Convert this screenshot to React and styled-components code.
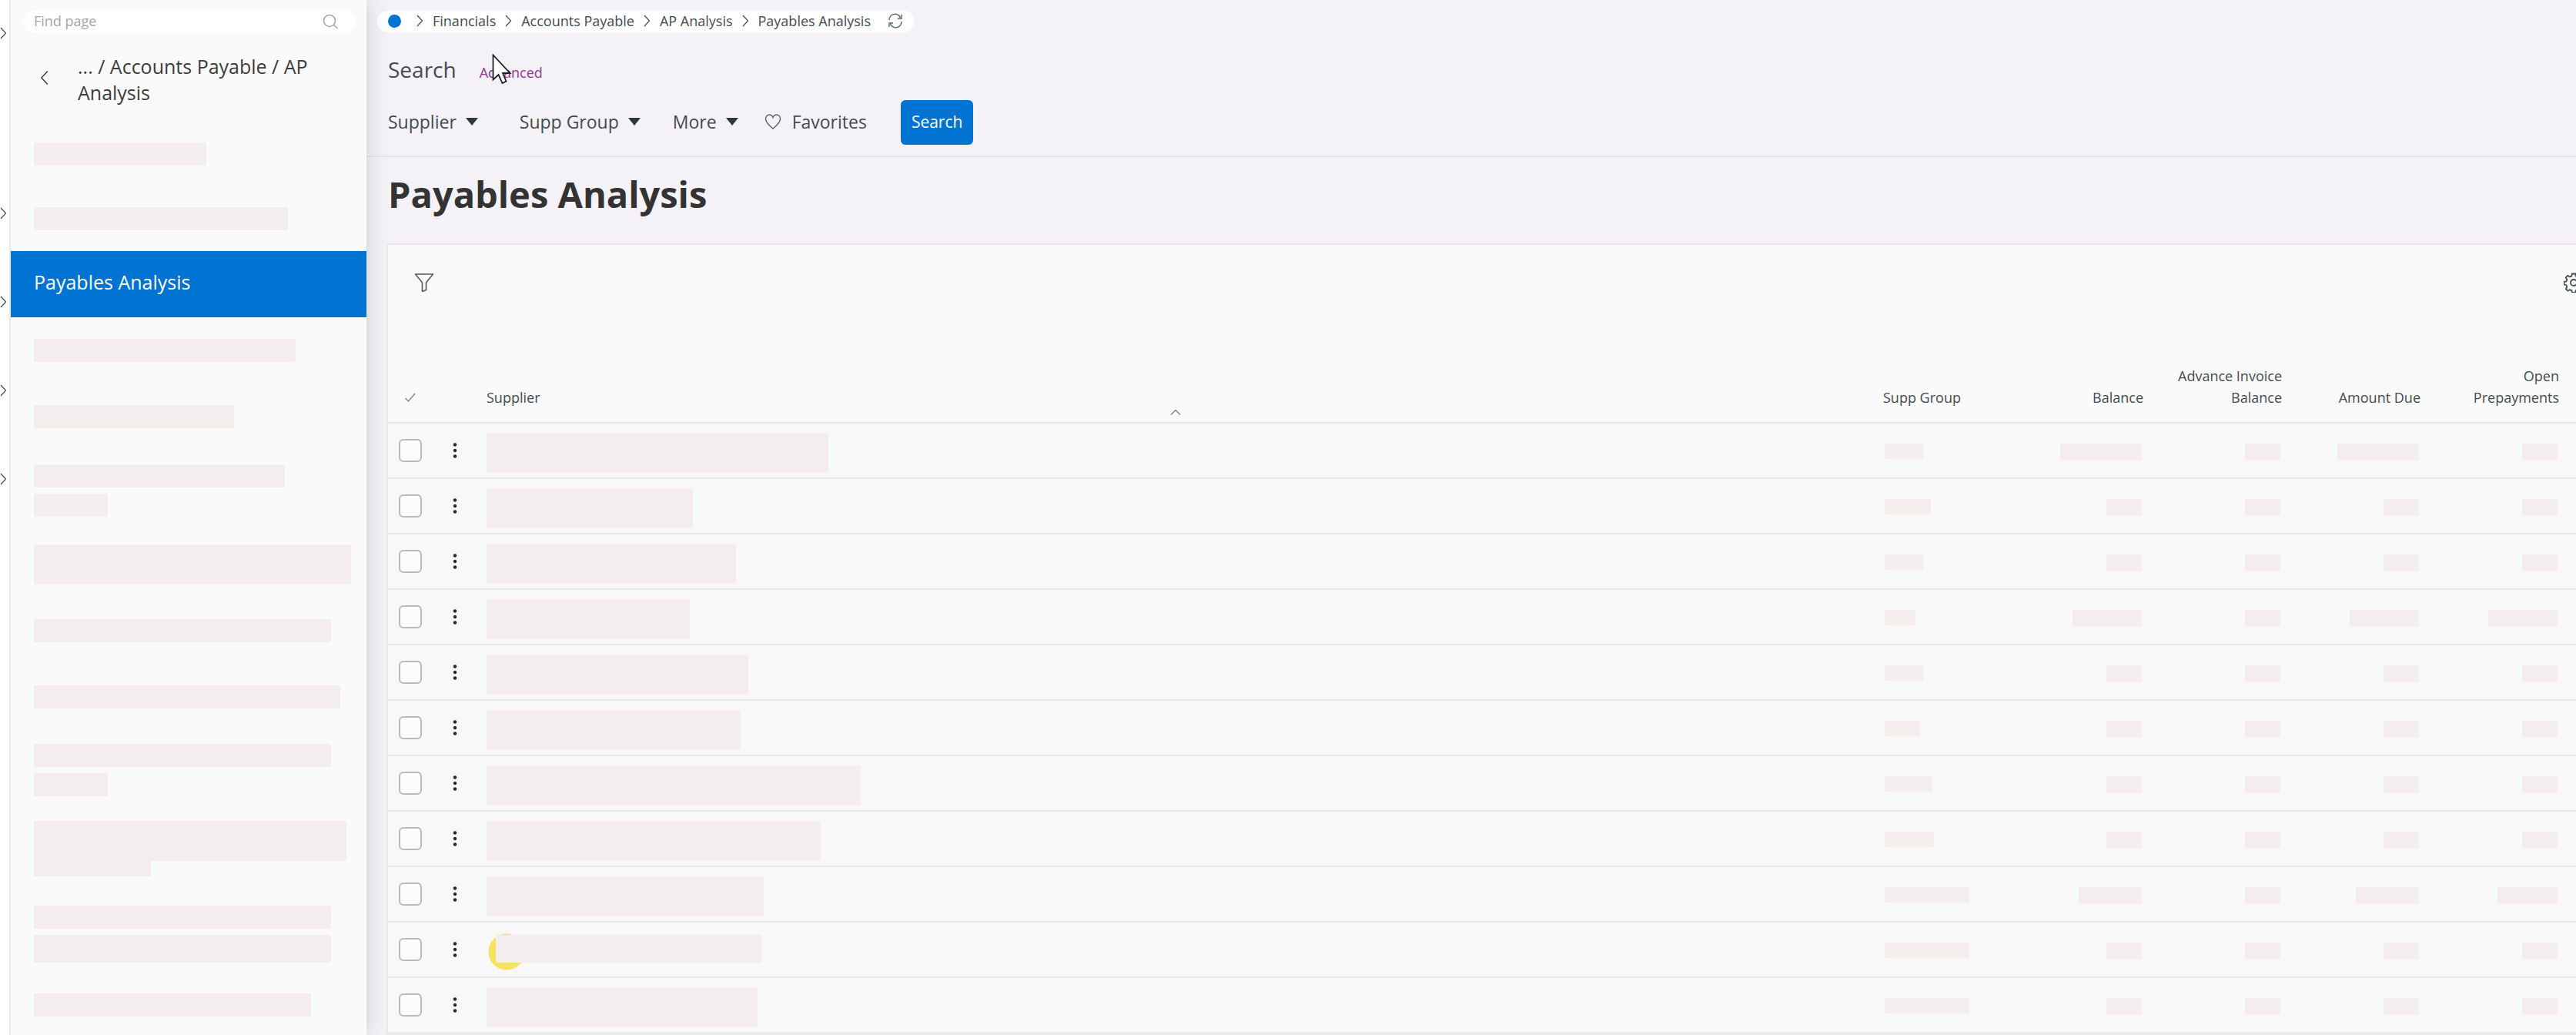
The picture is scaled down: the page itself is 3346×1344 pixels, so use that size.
import React from "react";
import styled, { createGlobalStyle } from "styled-components";

const GlobalStyle = createGlobalStyle`
  * {
    box-sizing: border-box;
  }
  html, body, #root {
    height: 100%;
  }
  body {
    margin: 0;
    overflow: hidden;
    font-family: "Open Sans", "Noto Sans", sans-serif;
    color: #444b50;
    background-color: #f4f2f6;
  }
  button {
    padding: 0;
    border: none;
    background: none;
    font-family: inherit;
    color: inherit;
    cursor: pointer;
  }
  a {
    color: inherit;
    text-decoration: none;
  }
`;

// pad is the space above and below the bars of an entry
const navTop = [
  { id: 1, pad: 27, bars: [{ w: 224, h: 30 }] },
  { id: 2, pad: 27, bars: [{ w: 330, h: 30 }] },
];

const navBottom = [
  { id: 3, pad: 28, bars: [{ w: 340, h: 30 }] },
  { id: 4, pad: 28, bars: [{ w: 260, h: 30 }] },
  { id: 5, pad: 19, bars: [{ w: 326, h: 30 }, { w: 96, h: 30 }] },
  { id: 6, pad: 17, bars: [{ w: 412, h: 52 }] },
  { id: 7, pad: 28, bars: [{ w: 386, h: 30 }] },
  { id: 8, pad: 28, bars: [{ w: 398, h: 30 }] },
  { id: 9, pad: 18, bars: [{ w: 386, h: 30 }, { w: 96, h: 30 }] },
  { id: 10, pad: 14, joined: true, bars: [{ w: 406, h: 52 }, { w: 152, h: 20 }] },
  { id: 11, pad: 24, bars: [{ w: 386, h: 30 }, { w: 386, h: 36 }] },
  { id: 12, pad: 16, bars: [{ w: 360, h: 30 }] },
];

// widths of the masked values: supplier, group, balance, advance, due, open
const rows = [
  { id: 1, supplier: 444, group: 50, amounts: [106, 46, 106, 46] },
  { id: 2, supplier: 268, group: 60, amounts: [46, 46, 46, 46] },
  { id: 3, supplier: 324, group: 50, amounts: [46, 46, 46, 46] },
  { id: 4, supplier: 264, group: 40, amounts: [90, 46, 90, 90] },
  { id: 5, supplier: 340, group: 50, amounts: [46, 46, 46, 46] },
  { id: 6, supplier: 330, group: 46, amounts: [46, 46, 46, 46] },
  { id: 7, supplier: 486, group: 62, amounts: [46, 46, 46, 46] },
  { id: 8, supplier: 434, group: 64, amounts: [46, 46, 46, 46] },
  { id: 9, supplier: 360, group: 110, amounts: [82, 46, 82, 78] },
  { id: 10, supplier: 346, group: 110, amounts: [46, 46, 46, 46], flagged: true },
  { id: 11, supplier: 352, group: 110, amounts: [46, 46, 46, 46] },
];

const crumbs = ["Financials", "Accounts Payable", "AP Analysis", "Payables Analysis"];

const Chevron = ({ left, size = 14 }) => (
  <svg width={size / 2 + 2} height={size + 2} viewBox="0 0 9 16" fill="none" stroke="currentColor" strokeWidth="1.2">
    <path d={left ? "M8 1 1.5 8 8 15" : "M1 1 7.5 8 1 15"} />
  </svg>
);

const SearchIcon = () => (
  <svg width="22" height="22" viewBox="0 0 22 22" fill="none" stroke="#a6a6a6" strokeWidth="1.6">
    <circle cx="10" cy="10" r="7.5" />
    <path d="m15.5 15.5 5 4.5" />
  </svg>
);

const RefreshIcon = () => (
  <svg width="20" height="20" viewBox="0 0 20 20" fill="none" stroke="#5b6266" strokeWidth="1.4">
    <path d="M2 9a7.5 7.5 0 0 1 14.5-3M18 2v5h-5" />
    <path d="M18 11a7.5 7.5 0 0 1-14.5 3M2 18v-5h5" />
  </svg>
);

const HeartIcon = () => (
  <svg width="22" height="22" viewBox="0 0 22 22" fill="none" stroke="#5b6266" strokeWidth="1.4">
    <path d="M11 20C7 16.5 1.5 12.5 1.5 7.500 1.500 4 3.800 2 6.300 2 8.500 2 10.200 3.300 11 5.500 11.800 3.300 13.500 2 15.700 2c2.500 0 4.800 2 4.800 5.500 0 5-5.500 9-9.500 12.500Z" />
  </svg>
);

const FilterIcon = () => (
  <svg width="26" height="26" viewBox="0 0 26 26" fill="none" stroke="#555b5f" strokeWidth="1.6">
    <path d="M1.500 2h23L15.500 13v9.500l-5 2V13Z" strokeLinejoin="round" />
  </svg>
);

const GearIcon = () => (
  <svg width="26" height="26" viewBox="0 0 26 26" fill="none" stroke="#444b50" strokeWidth="1.8">
    <path d="M11 1.500h4l.7 3 2.300 1 2.700-1.700 2.500 2.700-1.500 2.700 1 2.300 2.800.5v3.500l-2.800.7-1 2.300 1.500 2.700-2.500 2.500-2.700-1.500-2.300 1-.7 2.800h-4l-.7-2.800-2.300-1-2.700 1.500-2.500-2.500 1.500-2.700-1-2.300-2.800-.7V12l2.800-.5 1-2.300-1.500-2.700 2.500-2.700L8 5.500l2.300-1Z" />
    <circle cx="13" cy="13" r="4" />
  </svg>
);

const CheckIcon = () => (
  <svg width="16" height="14" viewBox="0 0 16 14" fill="none" stroke="#7f8488" strokeWidth="1.4">
    <path d="m1.500 8 4 4L14 2" />
  </svg>
);

const DotsIcon = () => (
  <svg width="6" height="20" viewBox="0 0 6 20" fill="#22282c">
    <circle cx="3" cy="2.500" r="2.200" />
    <circle cx="3" cy="10" r="2.200" />
    <circle cx="3" cy="17.500" r="2.200" />
  </svg>
);

const SortIcon = () => (
  <svg width="14" height="9" viewBox="0 0 14 9" fill="none" stroke="#7f8488" strokeWidth="1.500">
    <path d="m1 7.500 6-6 6 6" />
  </svg>
);

const PointerIcon = () => (
  <svg width="26" height="40" viewBox="0 0 26 40" fill="#fff" stroke="#1d1d2b" strokeWidth="1.800">
    <path d="M1.500 1.500v32l7-6.500 5 11 5-2.500-4.500-10.500H23.500Z" />
  </svg>
);

const NavEntry = ({ entry }) => (
  <NavItem $pad={entry.pad} $joined={entry.joined}>
    {entry.bars.map((bar, i) => (
      <Mask key={i} $w={bar.w} $h={bar.h} />
    ))}
  </NavItem>
);

const App = () => {
  return (
    <Page>
      <GlobalStyle />

      {/* Collapsed navigator strip */}
      <Strip>
        {[0, 1, 2, 3, 4].map((n) => (
          <StripButton key={n} aria-label="Expand">
            <Chevron />
          </StripButton>
        ))}
      </Strip>

      <Sidebar>
        <FindBox>
          <input type="text" placeholder="Find page" aria-label="Find page" />
          <SearchIcon />
        </FindBox>
        <BackRow>
          <button aria-label="Back">
            <Chevron left size={18} />
          </button>
          <span>... / Accounts Payable / AP Analysis</span>
        </BackRow>
        <NavList>
          {navTop.map((entry) => (
            <NavEntry key={entry.id} entry={entry} />
          ))}
          <li>
            <CurrentLink href="#payables">Payables Analysis</CurrentLink>
          </li>
          {navBottom.map((entry) => (
            <NavEntry key={entry.id} entry={entry} />
          ))}
        </NavList>
      </Sidebar>

      <Main>
        <SearchArea>
          <Crumbs>
            <HomeDot href="#home" aria-label="Home" />
            {crumbs.map((crumb) => (
              <React.Fragment key={crumb}>
                <Chevron />
                <a href="#crumb">{crumb}</a>
              </React.Fragment>
            ))}
            <RefreshButton aria-label="Refresh">
              <RefreshIcon />
            </RefreshButton>
          </Crumbs>

          <SearchHead>
            <h2>Search</h2>
            <Advanced href="#advanced">
              Advanced
              <Pointer>
                <PointerIcon />
              </Pointer>
            </Advanced>
          </SearchHead>

          <Filters>
            <DropButton $after={54}>
              Supplier <Caret />
            </DropButton>
            <DropButton $after={42}>
              Supp Group <Caret />
            </DropButton>
            <DropButton $after={34}>
              More <Caret />
            </DropButton>
            <Favorites>
              <HeartIcon /> Favorites
            </Favorites>
            <SearchButton>Search</SearchButton>
          </Filters>
        </SearchArea>

        <Title>Payables Analysis</Title>

        <Card>
          <CardTools>
            <button aria-label="Filter">
              <FilterIcon />
            </button>
            <button aria-label="Settings">
              <GearIcon />
            </button>
          </CardTools>

          <Table>
            <colgroup>
              <Col $w={58} />
              <Col $w={58} />
              <col />
              <Col $w={170} />
              <Col $w={192} />
              <Col $w={180} />
              <Col $w={180} />
              <Col $w={180} />
              <Col $w={10} />
            </colgroup>
            <thead>
              <tr>
                <Th $center>
                  <CheckIcon />
                </Th>
                <Th />
                <Th>
                  Supplier
                  <Sort>
                    <SortIcon />
                  </Sort>
                </Th>
                <Th>Supp Group</Th>
                <Th $right>Balance</Th>
                <Th $right>Advance Invoice Balance</Th>
                <Th $right>Amount Due</Th>
                <Th $right>Open Prepayments</Th>
                <Th />
              </tr>
            </thead>
            <tbody>
              {rows.map((row) => (
                <tr key={row.id}>
                  <Td>
                    <Tick type="checkbox" aria-label={`Select row ${row.id}`} />
                  </Td>
                  <Td>
                    <MenuButton aria-label="Row menu">
                      <DotsIcon />
                    </MenuButton>
                  </Td>
                  <Td $top={12}>
                    {row.flagged ? (
                      <Flagged>
                        <Mask $w={row.supplier} $h={36} />
                      </Flagged>
                    ) : (
                      <Mask $w={row.supplier} $h={52} />
                    )}
                  </Td>
                  <Td $top={26} $inset={14}>
                    <Mask $w={row.group} $h={20} />
                  </Td>
                  {row.amounts.map((w, i) => (
                    <Td key={i} $top={26} $inset={14} $right>
                      <Mask $w={w} $h={22} />
                    </Td>
                  ))}
                  <Td />
                </tr>
              ))}
            </tbody>
          </Table>
        </Card>
      </Main>
    </Page>
  );
};

const Page = styled.div`
  display: flex;
  height: 100%;
`;

const Mask = styled.div`
  width: ${({ $w }) => $w}px;
  height: ${({ $h }) => $h}px;
  border-radius: 2px;
  background-color: #f3eded;
`;

/* ---- Strip ---- */
const Strip = styled.div`
  display: flex;
  flex-direction: column;
  flex: none;
  width: 14px;
  padding-top: 35px;
  background-color: #fff;
  border-right: 2px solid #e8e8e8;
`;

const StripButton = styled.button`
  display: flex;
  height: 16px;
  margin-bottom: 99px;
  &:first-child {
    margin-bottom: 218px;
  }
`;

/* ---- Sidebar ---- */
const Sidebar = styled.nav`
  position: relative;
  z-index: 1;
  flex: none;
  width: 462px;
  padding-top: 14px;
  background-color: #fafafa;
  box-shadow: 0 0 28px rgba(0, 0, 0, 0.16);
  clip-path: inset(0 -40px 0 0);
`;

const FindBox = styled.div`
  display: flex;
  align-items: center;
  height: 28px;
  margin: 0 14px 0 16px;
  padding: 0 22px 0 14px;
  border-radius: 14px;
  background-color: #fff;

  input {
    flex: 1;
    min-width: 0;
    padding: 0 0 2px;
    border: none;
    outline: none;
    background: none;
    font-family: inherit;
    font-size: 18px;
    line-height: 24px;
    &::placeholder {
      color: #a6a6a6;
      opacity: 1;
    }
  }
`;

const BackRow = styled.div`
  display: flex;
  align-items: center;
  gap: 38px;
  height: 116px;
  padding: 6px 38px 0;
  font-size: 25px;
  line-height: 34px;
  color: #3c3c3c;
`;

const NavList = styled.ul`
  margin: 0;
  padding: 0;
  list-style: none;
`;

const NavItem = styled.li`
  display: flex;
  flex-direction: column;
  gap: ${({ $joined }) => ($joined ? 0 : 8)}px;
  padding: ${({ $pad }) => $pad}px 0 ${({ $pad }) => $pad}px 30px;
`;

const CurrentLink = styled.a`
  display: flex;
  align-items: center;
  height: 86px;
  padding: 0 30px 6px;
  font-size: 25px;
  color: #fff;
  background-color: #0073d3;
`;

/* ---- Main ---- */
const Main = styled.main`
  flex: 1;
  min-width: 0;
  overflow: hidden;
`;

const SearchArea = styled.header`
  padding: 14px 28px;
  border-bottom: 2px solid #e7e6e9;
`;

const Crumbs = styled.div`
  display: flex;
  align-items: center;
  gap: 12px;
  width: fit-content;
  height: 28px;
  margin-left: -14px;
  padding: 0 14px 2px;
  border-radius: 14px;
  font-size: 18px;
  line-height: 24px;
  background-color: #fff;
`;

const HomeDot = styled.a`
  width: 17px;
  height: 17px;
  margin-right: 8px;
  border-radius: 50%;
  background-color: #0073d3;
`;

const RefreshButton = styled.button`
  display: flex;
  margin-left: 10px;
`;

const SearchHead = styled.div`
  display: flex;
  align-items: baseline;
  gap: 30px;
  padding-top: 28px;

  h2 {
    margin: 0;
    font-size: 28px;
    font-weight: 400;
    line-height: 40px;
  }
`;

const Advanced = styled.a`
  position: relative;
  font-size: 18px;
  color: #93369a;
`;

const Pointer = styled.span`
  position: absolute;
  left: 16px;
  bottom: -4px;
  line-height: 0;
`;

const Filters = styled.div`
  display: flex;
  align-items: center;
  height: 58px;
  margin-top: 20px;
`;

const DropButton = styled.button`
  display: flex;
  align-items: center;
  gap: 12px;
  margin-right: ${({ $after }) => $after}px;
  padding-bottom: 2px;
  font-size: 23px;
`;

const Caret = styled.span`
  border: 8px solid transparent;
  border-top: 10px solid #2f383d;
  border-bottom: none;
`;

const Favorites = styled.button`
  display: flex;
  align-items: center;
  gap: 14px;
  padding-bottom: 2px;
  font-size: 23px;
`;

const SearchButton = styled.button`
  height: 58px;
  margin-left: 44px;
  padding: 0 14px 2px;
  border-radius: 6px;
  font-size: 21px;
  font-weight: 500;
  color: #fff;
  background-color: #0073d3;
`;

const Title = styled.h1`
  margin: 0;
  padding: 16px 28px 32px;
  font-size: 47px;
  font-weight: 700;
  line-height: 64px;
  color: #333;
`;

const Card = styled.section`
  margin-left: 26px;
  border: 2px solid #e9e9eb;
  border-right: none;
  border-radius: 4px 0 0 0;
  background-color: #fafafa;
`;

const CardTools = styled.div`
  display: flex;
  justify-content: space-between;
  padding: 36px 0 0 34px;
  margin-right: -10px;
`;

const Table = styled.table`
  width: 100%;
  margin-top: 60px;
  table-layout: fixed;
  border-collapse: separate;
  border-spacing: 0;
`;

const Col = styled.col`
  width: ${({ $w }) => $w}px;
`;

const Th = styled.th`
  position: relative;
  height: 106px;
  padding: 0 12px 18px;
  border-bottom: 2px solid #e9e9e9;
  vertical-align: bottom;
  text-align: ${({ $right, $center }) => ($right ? "right" : $center ? "center" : "left")};
  font-size: 18px;
  font-weight: 400;
  line-height: 28px;
  color: #444b50;
`;

const Sort = styled.span`
  position: absolute;
  left: 50%;
  bottom: 8px;
  margin-left: -7px;
  line-height: 0;
`;

const Td = styled.td`
  height: 72px;
  padding: ${({ $top = 0 }) => $top}px ${({ $inset = 12 }) => $inset}px 0;
  border-bottom: 2px solid #e9e9e9;
  vertical-align: ${({ $top }) => ($top ? "top" : "middle")};
  background-color: #f8f8f8;

  ${Mask} {
    margin-left: ${({ $right }) => ($right ? "auto" : 0)};
  }
`;

const Tick = styled.input`
  display: block;
  appearance: none;
  width: 30px;
  height: 30px;
  margin: 0 0 0 2px;
  border: 2px solid #b9b9b9;
  border-radius: 6px;
  background-color: #fcfcfc;
`;

const MenuButton = styled.button`
  display: flex;
  margin: 0 auto;
`;

const Flagged = styled.div`
  height: 48px;
  margin: 2px 0 0 2px;
  padding: 2px 0 0 10px;
  background: radial-gradient(circle at 24px 24px, #f5e264 23px, transparent 24px);
`;

export default App;
